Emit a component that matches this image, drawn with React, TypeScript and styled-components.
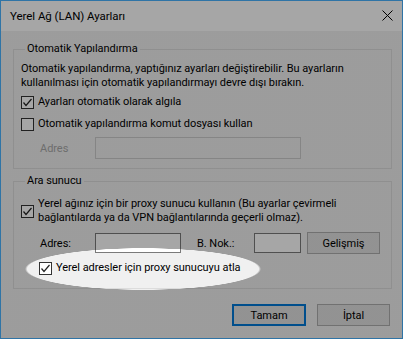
import React from "react";
import styled, { createGlobalStyle } from "styled-components";

const Global = createGlobalStyle`
  html, body { margin: 0; padding: 0; background: #ffffff; }
  body {
    font-family: Roboto, "Noto Sans", Arial, sans-serif;
    font-size: 11px;
    letter-spacing: -0.05px;
    color: #000;
  }
  * { box-sizing: border-box; }
`;

const Window = styled.div`
  position: relative;
  width: 403px;
  height: 339px;
  border: 1px solid #2f74a6;
  background: #f0f0f0;
  display: flex;
  flex-direction: column;
  overflow: hidden;
`;

const TitleBar = styled.div`
  height: 30px;
  background: #ffffff;
  display: flex;
  align-items: center;
  justify-content: space-between;
  padding: 0 9px 1px 9px;
  flex: none;
`;

const Title = styled.span`
  font-size: 11.5px;
  white-space: nowrap;
`;

const Body = styled.div`
  flex: 1;
  display: flex;
  flex-direction: column;
  padding: 10px 10px 0 12px;
`;

const Group = styled.fieldset<{ $top: number; $bottom: number }>`
  margin: 0 0 4px 0;
  padding: ${(p) => p.$top}px 8px ${(p) => p.$bottom}px 7px;
  border: 1px solid #dcdcdc;
  min-width: 0;
  display: flex;
  flex-direction: column;
`;

const Legend = styled.legend`
  margin-left: 4px;
  padding: 0 2px;
  line-height: 16px;
  white-space: nowrap;
`;

const Para = styled.p`
  margin: 0;
  line-height: 14px;
  white-space: nowrap;
`;

const CheckRow = styled.label<{ $top: number; $indent?: number }>`
  display: flex;
  align-items: center;
  gap: 4px;
  margin-top: ${(p) => p.$top}px;
  margin-left: ${(p) => p.$indent ?? 0}px;
  line-height: 14px;
  white-space: nowrap;
`;

const Box = styled.span`
  width: 13px;
  height: 13px;
  border: 1px solid #333333;
  background: #ffffff;
  flex: none;
  display: flex;
  align-items: center;
  justify-content: center;
`;

const FieldRow = styled.div<{ $top: number }>`
  display: flex;
  align-items: center;
  margin-top: ${(p) => p.$top}px;
  margin-left: 19px;
`;

const FieldLabel = styled.span<{ $width: number; $pad?: number; $disabled?: boolean }>`
  width: ${(p) => p.$width}px;
  padding-left: ${(p) => p.$pad ?? 0}px;
  flex: none;
  color: ${(p) => (p.$disabled ? "#a8a8a8" : "#000")};
  white-space: nowrap;
`;

const Input = styled.span<{ $width: number; $height: number; $disabled?: boolean }>`
  width: ${(p) => p.$width}px;
  height: ${(p) => p.$height}px;
  flex: none;
  border: 1px solid ${(p) => (p.$disabled ? "#cccccc" : "#7a7a7a")};
  background: ${(p) => (p.$disabled ? "#f0f0f0" : "#ffffff")};
`;

const Button = styled.button<{ $default?: boolean; $width: number; $gap?: number }>`
  width: ${(p) => p.$width}px;
  height: 22px;
  margin-left: ${(p) => p.$gap ?? 0}px;
  flex: none;
  padding: 0;
  font-family: inherit;
  font-size: 11px;
  letter-spacing: inherit;
  color: #000;
  background: #e1e1e1;
  border: ${(p) => (p.$default ? "2px solid #0078d7" : "1px solid #adadad")};
`;

const Footer = styled.div`
  display: flex;
  justify-content: flex-end;
  gap: 11px;
  margin-top: 11px;
  padding-right: 2px;
`;

const Spotlight = styled.div`
  position: absolute;
  inset: 0;
  pointer-events: none;
  background: radial-gradient(
    118px 21px at 142px 268px,
    rgba(0, 0, 0, 0) 98%,
    rgba(0, 0, 0, 0.35) 100%
  );
`;

const Check = () => (
  <svg width="11" height="11" viewBox="0 0 11 11">
    <polyline points="1.5,5.5 4,8.5 9.5,2" fill="none" stroke="#222" strokeWidth="1.2" />
  </svg>
);

const CloseX = () => (
  <svg width="11" height="11" viewBox="0 0 11 11">
    <path d="M0.5 0.5 L10.5 10.5 M10.5 0.5 L0.5 10.5" stroke="#000" strokeWidth="1" />
  </svg>
);

export default function App() {
  return (
    <>
      <Global />
      <Window>
        <TitleBar>
          <Title>Yerel Ağ (LAN) Ayarları</Title>
          <CloseX />
        </TitleBar>
        <Body>
          <Group $top={5} $bottom={9}>
            <Legend>Otomatik Yapılandırma</Legend>
            <Para>
              Otomatik yapılandırma, yaptığınız ayarları değiştirebilir. Bu ayarların
              <br />
              kullanılması için otomatik yapılandırmayı devre dışı bırakın.
            </Para>
            <CheckRow $top={5}>
              <Box>
                <Check />
              </Box>
              Ayarları otomatik olarak algıla
            </CheckRow>
            <CheckRow $top={8}>
              <Box />
              Otomatik yapılandırma komut dosyası kullan
            </CheckRow>
            <FieldRow $top={6}>
              <FieldLabel $width={55} $disabled>
                Adres
              </FieldLabel>
              <Input $width={206} $height={22} $disabled />
            </FieldRow>
          </Group>
          <Group $top={2} $bottom={13}>
            <Legend>Ara sunucu</Legend>
            <CheckRow $top={6}>
              <Box>
                <Check />
              </Box>
              <span>
                Yerel ağınız için bir proxy sunucu kullanın (Bu ayarlar çevirmeli
                <br />
                bağlantılarda ya da VPN bağlantılarında geçerli olmaz).
              </span>
            </CheckRow>
            <FieldRow $top={7}>
              <FieldLabel $width={55}>Adres:</FieldLabel>
              <Input $width={86} $height={20} />
              <FieldLabel $width={73} $pad={16}>
                B. Nok.:
              </FieldLabel>
              <Input $width={47} $height={20} />
              <Button $width={73} $gap={6}>
                Gelişmiş
              </Button>
            </FieldRow>
            <CheckRow $top={7} $indent={18}>
              <Box>
                <Check />
              </Box>
              Yerel adresler için proxy sunucuyu atla
            </CheckRow>
          </Group>
          <Footer>
            <Button $default $width={74}>
              Tamam
            </Button>
            <Button $width={73}>İptal</Button>
          </Footer>
        </Body>
        <Spotlight />
      </Window>
    </>
  );
}
